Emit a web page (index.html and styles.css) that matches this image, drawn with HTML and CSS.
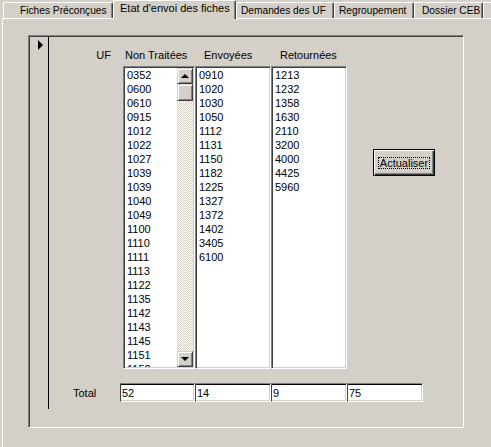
FILE: index.html
```html
<!DOCTYPE html>
<html lang="fr">
<head>
<meta charset="utf-8">
<title>Etat d'envoi des fiches</title>
<link rel="stylesheet" href="styles.css">
</head>
<body>
<div class="tabs">
  <div class="tab tab-fiches">Fiches Préconçues</div>
  <div class="tab tab-active tab-etat">Etat d'envoi des fiches</div>
  <div class="tab tab-demandes">Demandes des UF</div>
  <div class="tab tab-regroup">Regroupement</div>
  <div class="tab tab-dossier">Dossier CEB</div>
  <div class="tab tab-more"></div>
</div>
<div class="page">
  <div class="subform">
    <div class="selector"><span class="rec-arrow"></span></div>
    <div class="detail">
      <div class="header">
        <div class="h-uf">UF</div>
        <div class="h-nt">Non Traitées</div>
        <div class="h-env">Envoyées</div>
        <div class="h-ret">Retournées</div>
      </div>
      <div class="lists">
        <div class="list list-nt">
          <div class="items">
            <div>0352</div><div>0600</div><div>0610</div><div>0915</div><div>1012</div><div>1022</div><div>1027</div><div>1039</div><div>1039</div><div>1040</div><div>1049</div><div>1100</div><div>1110</div><div>1111</div><div>1113</div><div>1122</div><div>1135</div><div>1142</div><div>1143</div><div>1145</div><div>1151</div><div>1152</div>
          </div>
          <div class="sb">
            <div class="raised sb-btn"><span class="arr-up"></span></div>
            <div class="raised sb-thumb"></div>
            <div class="sb-track"></div>
            <div class="raised sb-btn"><span class="arr-down"></span></div>
          </div>
        </div>
        <div class="list list-env">
          <div class="items">
            <div>0910</div><div>1020</div><div>1030</div><div>1050</div><div>1112</div><div>1131</div><div>1150</div><div>1182</div><div>1225</div><div>1327</div><div>1372</div><div>1402</div><div>3405</div><div>6100</div>
          </div>
        </div>
        <div class="list list-ret">
          <div class="items">
            <div>1213</div><div>1232</div><div>1358</div><div>1630</div><div>2110</div><div>3200</div><div>4000</div><div>4425</div><div>5960</div>
          </div>
        </div>
        <div class="btn"><span>Actualiser</span></div>
      </div>
      <div class="totals">
        <div class="t-label">Total</div>
        <div class="tbox tbox-first">52</div>
        <div class="tbox">14</div>
        <div class="tbox">9</div>
        <div class="tbox">75</div>
      </div>
    </div>
  </div>
</div>
</body>
</html>
```
FILE: styles.css
```css
html, body {
  margin: 0;
  padding: 0;
}
body {
  background: #d4d0c8;
  font-family: "Liberation Sans", Arial, sans-serif;
  font-size: 11px;
  color: #000;
  width: 491px;
  height: 447px;
  overflow: hidden;
}

/* ---- tab strip ---- */
.tabs {
  display: flex;
  align-items: flex-end;
  height: 19px;
  padding-left: 3px;
  overflow: hidden;
  position: relative;
  z-index: 1;
  margin-bottom: -1px;
}
.tab {
  flex: none;
  box-sizing: border-box;
  height: 16px;
  margin-bottom: 1px;
  line-height: 15px;
  font-size: 10.2px;
  border-top: 1px solid #fff;
  border-left: 1px solid #fff;
  border-right: 1px solid #404040;
  box-shadow: inset -1px 0 #808080;
  border-radius: 2px 2px 0 0;
  white-space: nowrap;
  overflow: hidden;
  background: #d4d0c8;
}
.tab-active {
  height: 19px;
  margin-bottom: 0;
  line-height: 14px;
  font-size: 11px;
}
.tab-fiches { width: 110px; padding-left: 16px; }
.tab-etat { width: 123px; padding-left: 6px; }
.tab-demandes { width: 98px; padding-left: 4px; }
.tab-regroup { width: 80px; padding-left: 4px; }
.tab-dossier { width: 69px; padding-left: 7px; }
.tab-more { width: 20px; }

/* ---- tab page ---- */
.page {
  margin-left: 2px;
  height: 429px;
  border-top: 1px solid #fff;
  border-left: 1px solid #fff;
  box-sizing: border-box;
}

/* ---- sub form ---- */
.subform {
  box-sizing: border-box;
  display: flex;
  width: 436px;
  height: 393px;
  margin: 16px 0 0 25px;
  padding: 1px 0 0 1px;
  border-style: solid;
  border-width: 1px;
  border-color: #808080 #fff #fff #808080;
  box-shadow: inset 1px 1px #404040;
}
.selector {
  box-sizing: border-box;
  flex: none;
  width: 19px;
  height: 372px;
  border-right: 1px solid #000;
  padding: 3px 0 0 8px;
}
.rec-arrow {
  display: block;
  width: 0;
  height: 0;
  border-left: 5px solid #000;
  border-top: 5px solid transparent;
  border-bottom: 5px solid transparent;
}
.detail {
  display: flex;
  flex-direction: column;
}
.header {
  display: flex;
  margin-top: 12px;
  height: 13px;
  line-height: 13px;
}
.h-uf { width: 62px; text-align: right; }
.h-nt { width: 79px; margin-left: 14px; }
.h-env { width: 76px; }
.h-ret { width: 70px; }

.lists {
  display: flex;
  align-items: flex-start;
  margin-top: 4px;
  padding-left: 74px;
  height: 303px;
}
.list {
  box-sizing: border-box;
  display: flex;
  flex: none;
  height: 303px;
  background: #fff;
  border-style: solid;
  border-width: 1px;
  border-color: #808080 #fff #fff #808080;
  box-shadow: inset 1px 1px #404040, inset -1px -1px #d4d0c8;
  padding: 1px 1px 1px 3px;
  overflow: hidden;
}
.list-nt { width: 72px; }
.list-env { width: 76px; }
.list-ret { width: 76px; }
.items {
  flex: 1;
  line-height: 14px;
  overflow: hidden;
}

/* scrollbar */
.sb {
  width: 16px;
  display: flex;
  flex-direction: column;
  flex: none;
  background-color: #fff;
  background-image: conic-gradient(#d4d0c8 25%, #fff 0 50%, #d4d0c8 0 75%, #fff 0);
  background-size: 2px 2px;
}
.raised {
  box-sizing: border-box;
  background: #d4d0c8;
  border-style: solid;
  border-width: 1px;
  border-color: #d4d0c8 #404040 #404040 #d4d0c8;
  box-shadow: inset 1px 1px #fff, inset -1px -1px #808080;
}
.sb-btn {
  height: 16px;
  display: flex;
  align-items: center;
  justify-content: center;
  flex: none;
}
.sb-thumb {
  height: 17px;
  flex: none;
}
.sb-track { flex: 1; }
.arr-up, .arr-down {
  width: 0;
  height: 0;
  border-left: 4px solid transparent;
  border-right: 4px solid transparent;
}
.arr-up { border-bottom: 4px solid #000; }
.arr-down { border-top: 4px solid #000; }

/* button */
.btn {
  box-sizing: border-box;
  flex: none;
  width: 62px;
  height: 27px;
  margin: 83px 0 0 26px;
  border: 1px solid #000;
  background: #d4d0c8;
  box-shadow: inset 1px 1px #fff, inset -1px -1px #404040, inset -2px -2px #808080;
  display: flex;
  align-items: center;
  justify-content: center;
}
.btn span {
  border: 1px dotted #000;
  padding: 0 1px;
  line-height: 10px;
}

/* totals */
.totals {
  display: flex;
  align-items: center;
  margin-top: 14px;
  padding-left: 24px;
  height: 19px;
}
.t-label { width: 47px; flex: none; }
.tbox {
  box-sizing: border-box;
  flex: none;
  width: 76px;
  height: 19px;
  line-height: 16px;
  background: #fff;
  border-style: solid;
  border-width: 1px;
  border-color: #808080 #fff #fff #404040;
  box-shadow: inset 0 1px #000, inset -1px -1px #d4d0c8;
  padding: 1px 0 0 1px;
}
.tbox-first { width: 75px; }
```
